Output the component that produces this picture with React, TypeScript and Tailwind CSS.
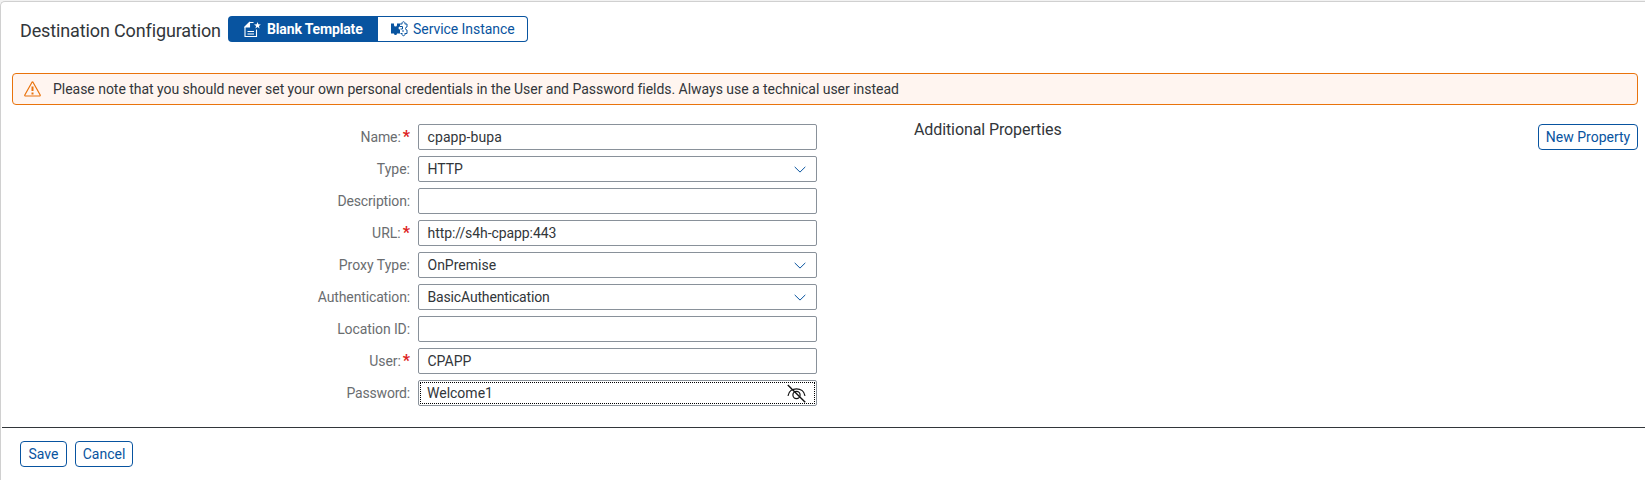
import React from "react";

type Field = {
  label: string;
  value: string;
  required?: boolean;
  kind?: "select" | "password";
  labelSpacing?: string;
  valueSpacing?: string;
};

const fields: Field[] = [
  { label: "Name:", value: "cpapp-bupa", required: true, labelSpacing: "tracking-[-0.1px]", valueSpacing: "tracking-[0.1px]" },
  { label: "Type:", value: "HTTP", kind: "select" },
  { label: "Description:", value: "", labelSpacing: "tracking-[-0.14px]" },
  { label: "URL:", value: "http://s4h-cpapp:443", required: true, valueSpacing: "tracking-[-0.08px]" },
  { label: "Proxy Type:", value: "OnPremise", kind: "select" },
  { label: "Authentication:", value: "BasicAuthentication", kind: "select", labelSpacing: "tracking-[-0.14px]", valueSpacing: "tracking-[-0.16px]" },
  { label: "Location ID:", value: "", labelSpacing: "tracking-[-0.1px]" },
  { label: "User:", value: "CPAPP", required: true, labelSpacing: "tracking-[-0.1px]" },
  { label: "Password:", value: "Welcome1", kind: "password", labelSpacing: "tracking-[-0.2px]" },
];

function TemplateIcon() {
  return (
    <svg width="17" height="17" viewBox="0 0 17 17" fill="none" stroke="currentColor" strokeWidth="1.1">
      <path d="M9.500 1.500H5.500L1 6V15.500H12.500V8.500" />
      <path d="M5.500 1.500V6H1Z" fill="currentColor" />
      <path d="M3.500 10.500H10M3.500 13H10" />
      <path d="M13.500 1l.9 2.300 2.500.1-2 1.600.7 2.500-2.100-1.400-2.100 1.400.7-2.500-2-1.600 2.500-.1Z" fill="currentColor" stroke="none" />
    </svg>
  );
}

function InstanceIcon() {
  return (
    <svg width="17" height="17" viewBox="0 0 17 17" fill="none" stroke="currentColor">
      <path d="M0 2.500H3V4A1.500 1.500 0 0 0 6 4V2.500H9V5.500A1.500 1.500 0 0 0 9 8.500V12.500H6A1.500 1.500 0 1 1 3 12.500H0Z" fill="currentColor" stroke="none" />
      <path d="M9 3H11.200A1.500 1.500 0 1 1 13.800 3H16V6A1.500 1.500 0 0 0 16 9V12.500H13.800A1.500 1.500 0 1 1 11.200 12.500H9.500M9 5.500H11.500V8H9.500M11 10H13" />
    </svg>
  );
}

function Chevron() {
  return (
    <svg width="12" height="7" viewBox="0 0 12 7" fill="none" stroke="#0854a0" strokeWidth="1">
      <path d="M.7.9 6 6.100 11.300.9" />
    </svg>
  );
}

function HiddenEye() {
  return (
    <svg width="19" height="19" viewBox="0 0 19 19" fill="none" stroke="#111" strokeWidth="1.2">
      <path d="M1 11.800C2.500 2.500 16.500 2.500 18 11.800" />
      <circle cx="9.500" cy="11" r="3.600" />
      <path d="M.8 1 18.200 18.200" strokeWidth="1.4" />
    </svg>
  );
}

export default function App() {
  return (
    <div className="h-[480px] w-[1645px] overflow-hidden bg-[#f2f2f2] pt-px font-['Roboto',sans-serif] text-sm text-[#32363a]">
      <div className="flex h-[479px] flex-col rounded-tl-[5px] border-t border-l border-[#d0d0d0] bg-white">
        <header className="flex h-[71px] items-start pt-3.5 pl-[19px]">
          <h1 className="mt-0.5 w-[208px] text-lg leading-[26px] tracking-[-0.13px] whitespace-nowrap">Destination Configuration</h1>
          <div className="flex h-[26px] text-[#0854a0]">
            <button className="flex w-[150px] items-center gap-[6px] rounded-l bg-[#0854a0] pl-4 font-bold tracking-[-0.15px] whitespace-nowrap text-white">
              <TemplateIcon />
              <span>Blank Template</span>
            </button>
            <button className="flex w-[150px] items-center gap-[5px] rounded-r border border-l-0 border-[#0854a0] pl-[13px] tracking-[-0.05px] whitespace-nowrap">
              <InstanceIcon />
              <span>Service Instance</span>
            </button>
          </div>
        </header>
        <div className="ml-[11px] flex h-8 w-[1626px] items-center rounded border border-[#e9730c] bg-[#fff5f0] pl-[11px]">
          <svg width="17" height="16" viewBox="0 0 17 16" fill="none" stroke="#e9730c" strokeWidth="1.2" strokeLinejoin="round">
            <path d="M8 1.200Q8.500.5 9 1.200L16.200 14Q16.400 15 15.500 15H1.500Q.6 15 .8 14Z" />
            <path d="M8.500 5.500V10M8.500 11.500V13.500" strokeWidth="2" />
          </svg>
          <span className="ml-3 tracking-[-0.03px] whitespace-nowrap">
            Please note that you should never set your own personal credentials in the User and Password fields. Always use a technical user instead
          </span>
        </div>
        <main className="flex h-[322px] pt-[19px]">
          <div className="flex w-[816px] flex-col gap-1.5">
            {fields.map((f) => (
              <div key={f.label} className="flex h-[26px]">
                <label className="flex w-[417px] items-center justify-end pr-2 whitespace-nowrap text-[#6a6d70]">
                  <span className={f.labelSpacing}>{f.label}</span>
                  {f.required && <span className="ml-0.5 text-base font-bold text-[#d22]">*</span>}
                </label>
                <div className="flex w-[399px] rounded-[2px] border border-[#89919a] p-px">
                  <div className={"flex flex-1 items-center justify-between " + (f.kind === "password" ? "border border-dotted border-black pr-2 pl-1.5" : "pr-[9px] pl-[7.5px]")}>
                    <span className={"whitespace-nowrap " + (f.valueSpacing ?? "")}>{f.value}</span>
                    {f.kind === "select" && <Chevron />}
                    {f.kind === "password" && <HiddenEye />}
                  </div>
                </div>
              </div>
            ))}
          </div>
          <div className="flex flex-1 items-start justify-between pr-[7px] pl-[97px]">
            <h2 className="text-base leading-3 tracking-[-0.1px] whitespace-nowrap">Additional Properties</h2>
            <button className="h-[26px] w-[100px] rounded border border-[#0854a0] text-[#0854a0]">New Property</button>
          </div>
        </main>
        <footer className="ml-px flex flex-1 gap-2 border-t border-[#32363a] pt-[13px] pl-[18px] text-[#0854a0]">
          <button className="h-[26px] w-[47px] rounded border border-[#0854a0]">Save</button>
          <button className="h-[26px] w-[58px] rounded border border-[#0854a0]">Cancel</button>
        </footer>
      </div>
    </div>
  );
}
